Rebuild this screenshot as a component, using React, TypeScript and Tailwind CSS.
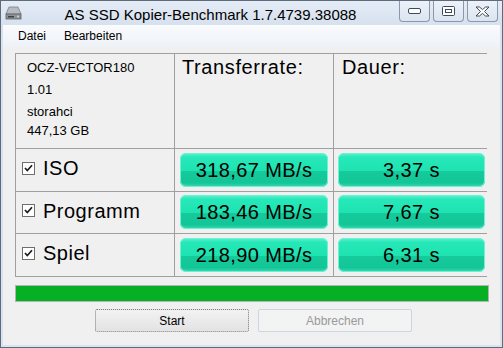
const rows = [
  { label: "ISO", rate: "318,67 MB/s", time: "3,37 s" },
  { label: "Programm", rate: "183,46 MB/s", time: "7,67 s" },
  { label: "Spiel", rate: "218,90 MB/s", time: "6,31 s" },
];

const font = "font-['Liberation_Sans',Arial,sans-serif]";

function DriveIcon() {
  return (
    <svg width="17" height="15" viewBox="0 0 17 15">
      <path d="M4 1 L13 1 L16 8 L1 8 Z" fill="#b8bcc2" stroke="#7a7f86" strokeWidth="0.8" />
      <rect x="1" y="8" width="15" height="5" fill="#8d9198" stroke="#5c6168" strokeWidth="0.8" />
      <rect x="3" y="10" width="6" height="1.5" fill="#3e4248" />
      <circle cx="13" cy="10.5" r="0.9" fill="#d8dde2" />
    </svg>
  );
}

function CaptionButton({ kind }: { kind: "min" | "max" | "close" }) {
  return (
    <div className="flex h-[21px] w-[31px] items-center justify-center rounded-b-[4px] border border-t-0 border-[#8a98ab] bg-[linear-gradient(to_bottom,#edf2f9,#dbe4ef)]">
      {kind === "min" && (
        <svg width="13" height="6" viewBox="0 0 13 6">
          <rect x="0.5" y="0.5" width="12" height="5" rx="1.5" fill="#fff" stroke="#404a58" />
        </svg>
      )}
      {kind === "max" && (
        <svg width="13" height="10" viewBox="0 0 13 10">
          <rect x="0.5" y="0.5" width="12" height="9" rx="1" fill="#fff" stroke="#404a58" />
          <rect x="3.5" y="3.5" width="6" height="3" fill="none" stroke="#404a58" />
        </svg>
      )}
      {kind === "close" && (
        <svg width="15" height="11" viewBox="0 0 15 11">
          <path
            d="M1 1 H4.5 L7.5 3.6 L10.5 1 H14 L9.5 5.5 L14 10 H10.5 L7.5 7.4 L4.5 10 H1 L5.5 5.5 Z"
            fill="#fff"
            stroke="#404a58"
            strokeWidth="1"
            strokeLinejoin="round"
          />
        </svg>
      )}
    </div>
  );
}

function ValueBox({ text }: { text: string }) {
  return (
    <div className="flex h-[34px] w-full items-center justify-center rounded-[6px] bg-[linear-gradient(to_bottom,#5ff3d2_0%,#27e8b8_12%,#1ee3b1_52%,#15ca9b_54%,#13c698_88%,#3fdcb6_100%)] text-[20px] tracking-[0.4px] text-black shadow-[inset_0_0_0_1px_#6ef0d2]">
      {text}
    </div>
  );
}

function Check() {
  return (
    <svg width="13" height="13" viewBox="0 0 13 13">
      <rect x="0.5" y="0.5" width="12" height="12" fill="#fff" stroke="#6f6f6f" />
      <path d="M3 6 L5.3 8.5 L10 3.3" fill="none" stroke="#1c1c1c" strokeWidth="1.7" />
    </svg>
  );
}

export default function App() {
  return (
    <div className={`flex h-[348px] w-[503px] flex-col overflow-hidden border border-[#5f6b7a] bg-[#d8e3f0] ${font}`}>
      <div className="flex h-[24px] bg-[linear-gradient(to_bottom,#e4ecf6,#d6e1ee)]">
        <div className="pl-[4px] pt-[5px]">
          <DriveIcon />
        </div>
        <div className="flex-1 pt-[3px] text-center text-[15px] text-black">
          AS SSD Kopier-Benchmark 1.7.4739.38088
        </div>
        <div className="mr-[4px] flex gap-[3px]">
          <CaptionButton kind="min" />
          <CaptionButton kind="max" />
          <CaptionButton kind="close" />
        </div>
      </div>

      <div className="mx-[2px] mb-[2px] flex flex-1 flex-col bg-[#f0f0f0]">
        <div className="flex h-[22px] items-center gap-[18px] bg-[linear-gradient(to_bottom,#f9fbfd,#eef2f7)] pl-[15px] text-[12px] text-black">
          <span>Datei</span>
          <span>Bearbeiten</span>
        </div>

        <div className="ml-[12px] mt-[6px] grid w-[472px] grid-cols-[158px_158px_154px] grid-rows-[94px_42px_41px_42px] gap-px border border-[#a0a0a0] bg-[#a0a0a0]">
          <div className="bg-[#f0f0f0] pl-[11px] pt-[6px] text-[13px] leading-[15px] text-black">
            <div>OCZ-VECTOR180</div>
            <div className="mt-[7px]">1.01</div>
            <div className="mt-[7px]">storahci</div>
            <div className="mt-[4px]">447,13 GB</div>
          </div>
          <div className="bg-[#f0f0f0] pl-[7px] pt-[1px] text-[20px] leading-[24px] tracking-[0.6px] text-black">
            Transferrate:
          </div>
          <div className="bg-[#f0f0f0] pl-[8px] pt-[1px] text-[20px] leading-[24px] tracking-[0.6px] text-black">
            Dauer:
          </div>

          {rows.map((row) => (
            <div key={row.label} className="contents">
              <div className="flex items-center gap-[8px] bg-[#f0f0f0] pb-[4px] pl-[6px] text-[20px] tracking-[0.5px] text-black">
                <Check />
                <span>{row.label}</span>
              </div>
              <div className="flex items-center bg-[#f0f0f0] px-[5px] pb-[1px]">
                <ValueBox text={row.rate} />
              </div>
              <div className="flex items-center bg-[#f0f0f0] pl-[4px] pr-[3px] pb-[1px]">
                <ValueBox text={row.time} />
              </div>
            </div>
          ))}
        </div>

        <div className="ml-[12px] mt-[8px] h-[17px] w-[474px] border border-[#b4b4b4] bg-[#06b025]" />

        <div className="mt-[7px] flex gap-[9px] pl-[92px] text-[12px]">
          <div className="flex h-[23px] w-[154px] items-center justify-center rounded-[2px] border border-dotted border-[#7a7a7a] bg-[linear-gradient(to_bottom,#f2f2f2,#e3e3e3)] text-black">
            Start
          </div>
          <div className="flex h-[23px] w-[154px] items-center justify-center rounded-[2px] border border-[#c9d5e2] bg-[#f3f3f3] text-[#9a9a9a]">
            Abbrechen
          </div>
        </div>
      </div>
    </div>
  );
}
